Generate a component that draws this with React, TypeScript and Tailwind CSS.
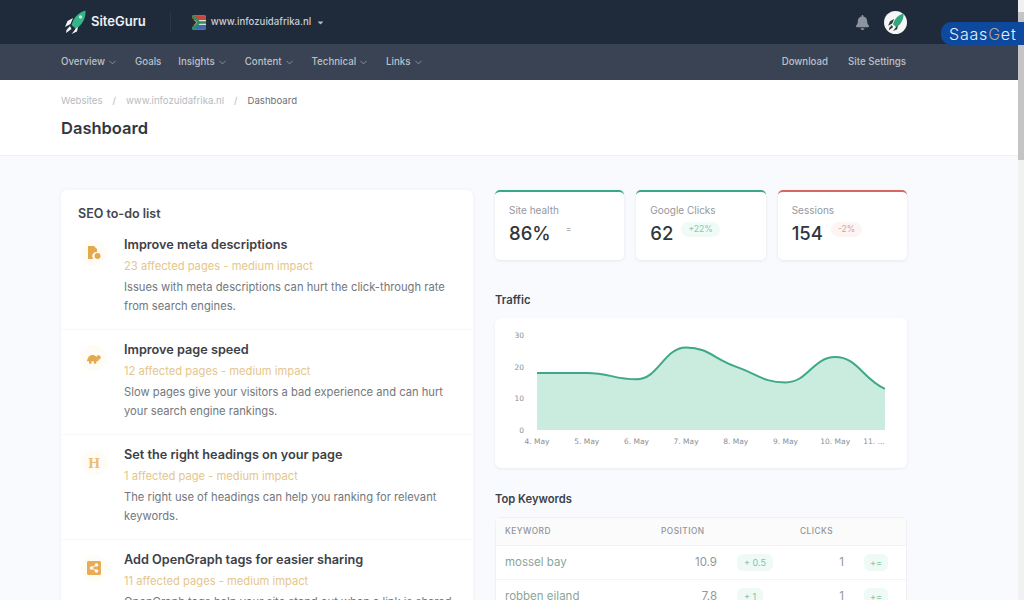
import { ChevronDown } from "lucide-react";
import { FaBell, FaCaretDown, FaShareAltSquare } from "react-icons/fa";

function Rocket({ className }: { className?: string }) {
  return (
    <svg viewBox="0 0 21 24" className={className}>
      <path d="M20.5.5C15 2 10 6 8 11l-1.5 4 4 3.5 3.5-2c4-3.5 7-9.5 6.500-16z" fill="#34b587" />
      <circle cx="15.500" cy="7" r="1.800" fill="#b8efd8" />
      <path d="M8 8l-5.500 3L0 17l5.500-3zM5 16l-3.500 4-.5 3 5.500-4zM11 18l-2 3-2.500 3 5.500-2.500 1-4.500z" fill="#f3f4f6" />
    </svg>
  );
}

function Flag() {
  return (
    <svg viewBox="0 0 14 14" className="h-[15px] w-[14px] rounded-[2px]">
      <rect width="14" height="14" fill="#d8dde0" />
      <rect width="14" height="4.500" fill="#c8483e" />
      <rect y="9.500" width="14" height="4.500" fill="#3e6bb0" />
      <path d="M0 0l7 7h7M0 14l7-7" stroke="#2f8f5b" strokeWidth="2.600" fill="none" />
      <path d="M0 2.500L4.500 7 0 11.500z" fill="#2b2b2b" />
    </svg>
  );
}

function FileIcon() {
  return (
    <svg viewBox="0 0 14 14" className="h-[14px] w-[14px]" fill="#e5a94d">
      <path d="M1 0h6l3 3v3.200A4 4 0 0 0 6.500 13H1z" />
      <circle cx="10.500" cy="10" r="3" />
    </svg>
  );
}

function TurtleIcon() {
  return (
    <svg viewBox="0 0 14 11" className="h-[11px] w-[14px]" fill="#e5a94d">
      <path d="M.5 7a5 5 0 0 1 10 0z" />
      <circle cx="11.500" cy="4.500" r="2.200" />
      <rect y="6.500" width="11.500" height="1.800" rx=".9" />
      <rect x="2" y="7.500" width="2.600" height="3.300" rx="1" />
      <rect x="6.800" y="7.500" width="2.600" height="3.300" rx="1" />
    </svg>
  );
}

const todos = [
  {
    icon: <FileIcon />,
    title: "Improve meta descriptions",
    meta: "23 affected pages - medium impact",
    text: "Issues with meta descriptions can hurt the click-through rate from search engines.",
  },
  {
    icon: <TurtleIcon />,
    title: "Improve page speed",
    meta: "12 affected pages - medium impact",
    text: "Slow pages give your visitors a bad experience and can hurt your search engine rankings.",
  },
  {
    icon: <span className="font-['Liberation_Serif',serif] text-[15px] font-bold leading-none text-[#ecbd72]">H</span>,
    title: "Set the right headings on your page",
    meta: "1 affected page - medium impact",
    text: "The right use of headings can help you ranking for relevant keywords.",
  },
  {
    icon: <FaShareAltSquare className="text-[16px] text-[#e9ab55]" />,
    title: "Add OpenGraph tags for easier sharing",
    meta: "11 affected pages - medium impact",
    text: "OpenGraph tags help your site stand out when a link is shared on social media platforms.",
  },
];

const navItems = [
  { label: "Overview", menu: true },
  { label: "Goals", menu: false },
  { label: "Insights", menu: true },
  { label: "Content", menu: true },
  { label: "Technical", menu: true },
  { label: "Links", menu: true },
];

const stats = [
  { label: "Site health", value: "86%", delta: "=", bar: "border-t-[#3aa886]", badge: "text-[#9ca3af]" },
  { label: "Google Clicks", value: "62", delta: "+22%", bar: "border-t-[#3aa886]", badge: "bg-[#f0faf6] text-[#7ccbb0]" },
  { label: "Sessions", value: "154", delta: "-2%", bar: "border-t-[#d9675f]", badge: "bg-[#fdf4f4] text-[#dc9d98]" },
];

const keywords = [
  { name: "mossel bay", position: "10.9", move: "+ 0.5", clicks: "1", change: "+=" },
  { name: "robben eiland", position: "7.8", move: "+ 1", clicks: "1", change: "+=" },
];

const traffic = [18, 18, 16, 26, 20, 15, 23, 13];
const days = ["4. May", "5. May", "6. May", "7. May", "8. May", "9. May", "10. May", "11. ..."];

function chartPath() {
  const pts = traffic.map((v, i) => [42 + 49.7 * i, 112 - v * 3.17]);
  let d = `M${pts[0][0]} ${pts[0][1]}`;
  const slope = (i: number) => {
    if (i === 0) return 0;
    if (i === pts.length - 1) return (pts[i][1] - pts[i - 1][1]) * 0.7;
    const a = pts[i][1] - pts[i - 1][1];
    const b = pts[i + 1][1] - pts[i][1];
    return a * b <= 0 ? 0 : (a + b) / 2;
  };
  for (let i = 0; i < pts.length - 1; i++) {
    const t = 49.7 * 0.45;
    d += ` C${pts[i][0] + t} ${pts[i][1] + slope(i) * 0.45} ${pts[i + 1][0] - t} ${pts[i + 1][1] - slope(i + 1) * 0.45} ${pts[i + 1][0]} ${pts[i + 1][1]}`;
  }
  return d;
}

function TrafficChart() {
  const line = chartPath();
  return (
    <svg viewBox="0 0 412 150" className="block h-[150px] w-[412px]">
      {[0, 10, 20, 30].map((v) => (
        <text key={v} x="29" y={115 - v * 3.17} textAnchor="end" fontSize="7.500" fill="#8b8f96" fontFamily="'DejaVu Sans', sans-serif">
          {v}
        </text>
      ))}
      <path d={`${line} L390 112 L42 112 Z`} fill="#c9ecdf" />
      <path d={line} fill="none" stroke="#3fa888" strokeWidth="2" />
      {days.map((day, i) => (
        <text key={day} x={i === 7 ? 379 : 42 + 49.7 * i} y="126" textAnchor="middle" fontSize="7.500" fill="#8b8f96" fontFamily="'DejaVu Sans', sans-serif">
          {day}
        </text>
      ))}
    </svg>
  );
}

export default function App() {
  return (
    <div className="relative flex h-[600px] w-[1024px] overflow-hidden bg-[#f8fafd] font-['Inter',sans-serif]">
      <div className="w-[1018px] shrink-0">
        <header className="flex h-[44px] items-center bg-[#1f2a3a] pl-[65px] pr-[111px]">
          <Rocket className="h-[24px] w-[21px]" />
          <span className="ml-[5px] text-[13px] font-semibold text-[#eef0f3]">SiteGuru</span>
          <div className="ml-[24px] h-[20px] w-px bg-[#2a3546]" />
          <div className="ml-[21px]">
            <Flag />
          </div>
          <span className="ml-[5px] text-[9.650px] font-medium text-[#c9cdd3]">www.infozuidafrika.nl</span>
          <FaCaretDown className="ml-[5px] text-[9px] text-[#b5bac2]" />
          <FaBell className="ml-auto text-[15px] text-[#8c94a0]" />
          <div className="ml-[14px] flex h-[23px] w-[23px] items-center justify-center rounded-full bg-[#f5f6f6]">
            <svg viewBox="0 0 21 24" className="h-[18px] w-[16px]">
              <path d="M20.500.5C15 2 10 6 8 11l-1.500 4 4 3.500 3.500-2c4-3.500 7-9.500 6.500-16z" fill="#34a57e" />
              <path d="M8 8l-5.500 3L0 17l5.500-3zM5 16l-3.500 4-.5 3 5.500-4zM11 18l-2 3-2.500 3 5.500-2.500 1-4.500z" fill="#2c3a36" />
            </svg>
          </div>
        </header>

        <nav className="flex h-[36px] items-center justify-between bg-[#394353] pl-[61px] pr-[112px] text-[9.700px] font-medium text-[#bcc1c9]">
          <div className="flex items-center gap-[17px]">
            {navItems.map((item) => (
              <span key={item.label} className="flex items-center gap-[2px]">
                {item.label}
                {item.menu && <ChevronDown size={11} strokeWidth={1.5} className="mt-[1px] text-[#a8aeb8]" />}
              </span>
            ))}
          </div>
          <div className="flex items-center gap-[20px]">
            <span>Download</span>
            <span>Site Settings</span>
          </div>
        </nav>

        <section className="h-[76px] border-b border-[#eff1f4] bg-white pl-[61px] pt-[14px]">
          <div className="flex items-center text-[9.600px] leading-[13px] text-[#b7bbc1]">
            <span>Websites</span>
            <span className="mx-[10px]">/</span>
            <span>www.infozuidafrika.nl</span>
            <span className="mx-[10px]">/</span>
            <span className="text-[#6b7077]">Dashboard</span>
          </div>
          <h1 className="mt-[9px] text-[16.500px] font-semibold leading-[24px] text-[#33373d]">Dashboard</h1>
        </section>

        <main className="flex gap-[22px] pl-[61px] pt-[34px]">
          <div className="h-[480px] w-[412px] shrink-0 rounded-t-[6px] bg-white pt-[16px] shadow-[0_0_4px_rgba(30,50,90,0.05)]">
            <h2 className="px-[17px] text-[12.500px] font-semibold leading-[16px] text-[#42474e]">SEO to-do list</h2>
            <ul className="mt-[3px]">
              {todos.map((todo) => (
                <li key={todo.title} className="flex h-[105px] border-b border-[#f8f8f9] pl-[20px] pr-[18px] pt-[10px] last:border-0">
                  <div className="mt-[5px] flex h-[26px] w-[26px] shrink-0 items-center justify-center rounded-full bg-[#fffcf6]">
                    {todo.icon}
                  </div>
                  <div className="ml-[17px] min-w-0">
                    <h3 className="text-[12.700px] font-semibold leading-[20px] text-[#3d4147]">{todo.title}</h3>
                    <p className="mt-[1px] text-[11.200px] leading-[20px] text-[#e5c68c]">{todo.meta}</p>
                    <p className="mt-[2px] text-[11.200px] leading-[19px] text-[#73777d]">{todo.text}</p>
                  </div>
                </li>
              ))}
            </ul>
          </div>

          <div className="w-[412px] shrink-0">
            <div className="grid grid-cols-3 gap-[12px]">
              {stats.map((stat) => (
                <div
                  key={stat.label}
                  className={`h-[70px] rounded-[5px] border-t-2 bg-white pl-[14px] pt-[11px] shadow-[0_1px_3px_rgba(30,50,90,0.09)] ${stat.bar}`}
                >
                  <div className="text-[10px] leading-[14px] text-[#94989e]">{stat.label}</div>
                  <div className="mt-[2px] flex items-start">
                    <span className="text-[18.500px] font-medium leading-[28px] text-[#32363c]">{stat.value}</span>
                    <span className={`ml-[8px] mt-[3px] rounded-full px-[7px] text-[8.600px] leading-[15px] ${stat.badge}`}>{stat.delta}</span>
                  </div>
                </div>
              ))}
            </div>

            <h2 className="mt-[32px] text-[11.300px] font-semibold leading-[16px] text-[#3d4147]">Traffic</h2>
            <div className="mt-[10px] rounded-[6px] bg-white shadow-[0_1px_3px_rgba(30,50,90,0.08)]">
              <TrafficChart />
            </div>

            <h2 className="mt-[23px] text-[11.200px] font-semibold leading-[16px] text-[#3d4147]">Top Keywords</h2>
            <div className="mt-[10px] rounded-t-[6px] border border-[#eef0f3] bg-white">
              <div className="grid h-[28px] grid-cols-[165px_56px_83px_44px_1fr] items-center border-b border-[#f0f1f4] bg-[#fbfbfc] text-[8.300px] font-medium tracking-[0.06em] text-[#8f9399]">
                <span className="pl-[9px]">KEYWORD</span>
                <span className="col-span-2">POSITION</span>
                <span className="col-span-2">CLICKS</span>
              </div>
              {keywords.map((row) => (
                <div
                  key={row.name}
                  className="grid h-[34px] grid-cols-[165px_56px_83px_44px_1fr] items-center border-b border-[#f3f4f6] text-[11.500px] text-[#93979c]"
                >
                  <span className="pl-[9px] text-[#8aa699]">{row.name}</span>
                  <span className="text-right">{row.position}</span>
                  <span className="pl-[20px]">
                    <span className="inline-block rounded-[6px] bg-[#effaf6] px-[7px] text-[9px] leading-[17px] text-[#7cc4aa]">{row.move}</span>
                  </span>
                  <span className="text-right">{row.clicks}</span>
                  <span className="pl-[20px]">
                    <span className="inline-block rounded-[6px] bg-[#effaf6] px-[6px] text-[9px] leading-[17px] text-[#7cc4aa]">{row.change}</span>
                  </span>
                </div>
              ))}
            </div>
          </div>
        </main>
      </div>

      <div className="flex-1 bg-[#f1f1f1] pt-[12px]">
        <div className="h-[148px] bg-[#c4c4c4]" />
      </div>

      <div className="absolute right-0 top-[22px] flex h-[23px] w-[83px] items-center rounded-l-[10px] bg-[#0d4a9f] pl-[8px] text-[16px] font-light leading-none tracking-[0.05em] text-[#e8f0fa]">
        Saas<span className="text-[#b9a48c]">G</span>et
      </div>
    </div>
  );
}
